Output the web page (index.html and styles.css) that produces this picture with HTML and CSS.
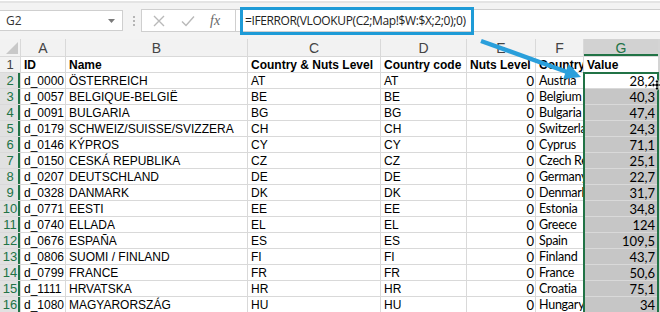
FILE: index.html
```html
<!DOCTYPE html>
<html lang="en">
<head>
  <meta charset="UTF-8" />
  <title>Value lookup</title>
  <link rel="stylesheet" href="styles.css">
</head>
<body>
  <div class="app">
    <div class="formula-bar">
      <div class="name-box">
        <span class="name">G2</span>
        <svg class="caret" width="7" height="4" viewBox="0 0 7 4"><path d="M0 0h7L3.5 4z" /></svg>
      </div>
      <div class="grip"><i></i><i></i><i></i></div>
      <div class="fx-tools">
        <svg class="tool" width="14" height="14" viewBox="0 0 14 14"><path d="M2 2l10 10M12 2L2 12" /></svg>
        <svg class="tool" width="16" height="14" viewBox="0 0 16 14"><path d="M2 7.5l4 4L14 2.5" /></svg>
        <span class="fx">fx</span>
      </div>
      <div class="formula">
        <span class="formula-text">=IFERROR(VLOOKUP(C2;Map!$W:$X;2;0);0)</span>
      </div>
    </div>

    <div class="sheet">
      <div class="grid">
        <div class="corner"><svg width="12" height="12" viewBox="0 0 12 12"><path d="M12 0V12H0z" /></svg></div>
        <div class="col">A</div><div class="col">B</div><div class="col">C</div><div class="col">D</div><div class="col">E</div><div class="col">F</div><div class="col on">G</div>

        <div class="row">1</div><div class="cell hd">ID</div><div class="cell hd">Name</div><div class="cell hd">Country &amp; Nuts Level</div><div class="cell hd">Country code</div><div class="cell hd">Nuts Level</div><div class="cell hd">Country</div><div class="cell hd">Value</div>
        <div class="row sel">2</div><div class="cell">d_0000</div><div class="cell">ÖSTERREICH</div><div class="cell">AT</div><div class="cell">AT</div><div class="cell num">0</div><div class="cell cal">Austria</div><div class="cell val active">28,2</div>
        <div class="row sel">3</div><div class="cell">d_0057</div><div class="cell">BELGIQUE-BELGIË</div><div class="cell">BE</div><div class="cell">BE</div><div class="cell num">0</div><div class="cell cal">Belgium</div><div class="cell val">40,3</div>
        <div class="row sel">4</div><div class="cell">d_0091</div><div class="cell">BULGARIA</div><div class="cell">BG</div><div class="cell">BG</div><div class="cell num">0</div><div class="cell cal">Bulgaria</div><div class="cell val">47,4</div>
        <div class="row sel">5</div><div class="cell">d_0179</div><div class="cell">SCHWEIZ/SUISSE/SVIZZERA</div><div class="cell">CH</div><div class="cell">CH</div><div class="cell num">0</div><div class="cell cal">Switzerland</div><div class="cell val">24,3</div>
        <div class="row sel">6</div><div class="cell">d_0146</div><div class="cell">KÝPROS</div><div class="cell">CY</div><div class="cell">CY</div><div class="cell num">0</div><div class="cell cal">Cyprus</div><div class="cell val">71,1</div>
        <div class="row sel">7</div><div class="cell">d_0150</div><div class="cell">CESKÁ REPUBLIKA</div><div class="cell">CZ</div><div class="cell">CZ</div><div class="cell num">0</div><div class="cell cal">Czech Republic</div><div class="cell val">25,1</div>
        <div class="row sel">8</div><div class="cell">d_0207</div><div class="cell">DEUTSCHLAND</div><div class="cell">DE</div><div class="cell">DE</div><div class="cell num">0</div><div class="cell cal">Germany</div><div class="cell val">22,7</div>
        <div class="row sel">9</div><div class="cell">d_0328</div><div class="cell">DANMARK</div><div class="cell">DK</div><div class="cell">DK</div><div class="cell num">0</div><div class="cell cal">Denmark</div><div class="cell val">31,7</div>
        <div class="row sel">10</div><div class="cell">d_0771</div><div class="cell">EESTI</div><div class="cell">EE</div><div class="cell">EE</div><div class="cell num">0</div><div class="cell cal">Estonia</div><div class="cell val">34,8</div>
        <div class="row sel">11</div><div class="cell">d_0740</div><div class="cell">ELLADA</div><div class="cell">EL</div><div class="cell">EL</div><div class="cell num">0</div><div class="cell cal">Greece</div><div class="cell val">124</div>
        <div class="row sel">12</div><div class="cell">d_0676</div><div class="cell">ESPAÑA</div><div class="cell">ES</div><div class="cell">ES</div><div class="cell num">0</div><div class="cell cal">Spain</div><div class="cell val">109,5</div>
        <div class="row sel">13</div><div class="cell">d_0806</div><div class="cell">SUOMI / FINLAND</div><div class="cell">FI</div><div class="cell">FI</div><div class="cell num">0</div><div class="cell cal">Finland</div><div class="cell val">43,7</div>
        <div class="row sel">14</div><div class="cell">d_0799</div><div class="cell">FRANCE</div><div class="cell">FR</div><div class="cell">FR</div><div class="cell num">0</div><div class="cell cal">France</div><div class="cell val">50,6</div>
        <div class="row sel">15</div><div class="cell">d_1111</div><div class="cell">HRVATSKA</div><div class="cell">HR</div><div class="cell">HR</div><div class="cell num">0</div><div class="cell cal">Croatia</div><div class="cell val">75,1</div>
        <div class="row sel">16</div><div class="cell">d_1080</div><div class="cell">MAGYARORSZÁG</div><div class="cell">HU</div><div class="cell">HU</div><div class="cell num">0</div><div class="cell cal">Hungary</div><div class="cell val">34</div>
      </div>
      <div class="selection"></div>
    </div>

    <!-- overlays drawn in page coordinates -->
    <svg class="cursor" width="12" height="12" viewBox="0 0 12 12">
      <path d="M6 0.5L8.5 3H7V5H9V3.5L11.5 6L9 8.5V7H7V9H8.5L6 11.5L3.5 9H5V7H3V8.5L0.5 6L3 3.5V5H5V3H3.5Z" />
    </svg>
    <svg class="arrow" width="660" height="312" viewBox="0 0 660 312">
      <line x1="481" y1="41" x2="567" y2="72" />
      <polygon points="581,77 563.2,79.1 568.6,64.1" />
    </svg>
  </div>
</body>
</html>
```

FILE: styles.css
```css
body {
  margin: 0;
  background: #fff;
  font-family: 'Liberation Sans', Arial, sans-serif;
  color: #000;
}

.app {
  position: relative;
  width: 660px;
  height: 312px;
  overflow: hidden;
}

/* formula bar */
.formula-bar {
  display: flex;
  align-items: flex-start;
  height: 38px;
  box-sizing: border-box;
  padding-top: 10px;
  background: #f3f3f3;
  border-top: 2px solid #e4e4e4;
  margin-top: 1px;
}

.name-box {
  display: flex;
  align-items: center;
  justify-content: space-between;
  box-sizing: border-box;
  width: 124px;
  height: 21px;
  margin-top: -3px;
  margin-left: -1px;
  padding: 0 7px 0 6px;
  background: #fff;
  border: 1px solid #cfcfcf;
  font-family: 'Open Sans', sans-serif;
  font-size: 12px;
  color: #333;
}

.caret path {
  fill: #7a7a7a;
}

.grip {
  display: flex;
  flex-direction: column;
  gap: 2px;
  margin: 3px 6px 0 10px;
}

.grip i {
  width: 2px;
  height: 2px;
  background: #b5b5b5;
}

.fx-tools {
  display: flex;
  align-items: center;
  gap: 14px;
  box-sizing: border-box;
  width: 95px;
  height: 23px;
  margin-top: -4px;
  padding-left: 10px;
  background: #fff;
  border: 1px solid #cfcfcf;
}

.tool path {
  fill: none;
  stroke: #b9b9b9;
  stroke-width: 1.4;
}

.fx {
  font-family: 'Liberation Serif', serif;
  font-style: italic;
  font-size: 14px;
  color: #666;
}

.formula {
  flex: 1;
  display: flex;
  align-items: center;
  box-sizing: border-box;
  height: 23px;
  margin-top: -4px;
  margin-left: -1px;
  background: #fff;
  border: 1px solid #cfcfcf;
  border-right: none;
}

.formula-text {
  box-sizing: border-box;
  height: 28px;
  margin-left: 4px;
  padding: 0 5px 0 2px;
  border: 3px solid #1e9bd7;
  font-family: 'Open Sans', sans-serif;
  font-size: 12px;
  letter-spacing: -0.38px;
  line-height: 22px;
  color: #222;
}

/* sheet */
.sheet {
  position: relative;
  height: 274px;
  background: #d4d4d4;
}

.grid {
  display: grid;
  grid-template-columns: 20px 44px 181px 132px 85px 68px 47px 74px;
  grid-template-rows: 17px repeat(16, 15px);
  gap: 1px;
  width: 658px;
  background: #d9d9d9;
}

.corner {
  display: flex;
  align-items: flex-end;
  justify-content: flex-end;
  padding: 0 2px 2px 0;
  background: #f2f2f2;
}

.corner path {
  fill: #c8c8c8;
}

.col {
  background: #f2f2f2;
  text-align: center;
  font-size: 14px;
  line-height: 18px;
  color: #444;
}

.col.on {
  background: #d2d2d2;
  color: #217346;
  box-shadow: inset 0 -2px 0 #217346;
}

.row {
  background: #f2f2f2;
  text-align: center;
  font-size: 13px;
  line-height: 16px;
  color: #444;
}

.row.sel {
  background: #e1e1e1;
  color: #217346;
  box-shadow: inset -2px 0 0 #217346;
}

.cell {
  padding: 0 3px;
  background: #fff;
  font-size: 12px;
  line-height: 16px;
  white-space: nowrap;
  overflow: hidden;
}

.cell.hd {
  font-weight: bold;
}

.cal,
.num,
.val {
  font-family: Lato, sans-serif;
  font-size: 13px;
}

.cal {
  font-size: 12.5px;
  letter-spacing: -0.25px;
}

.num {
  padding-right: 1px;
  text-align: right;
}

.val {
  text-align: right;
  background: #c6c6c6;
}

.val.active {
  background: #fff;
}

.selection {
  position: absolute;
  left: 583px;
  top: 33px;
  width: 76px;
  height: 250px;
  box-sizing: border-box;
  border: 2px solid #217346;
  pointer-events: none;
}

.cursor {
  position: absolute;
  left: 651px;
  top: 79px;
}

.cursor path {
  fill: #000;
  stroke: #fff;
  stroke-width: 0.8;
}

.arrow {
  position: absolute;
  left: 0;
  top: 0;
  pointer-events: none;
}

.arrow line {
  stroke: #2a9fdb;
  stroke-width: 4.5;
}

.arrow polygon {
  fill: #2a9fdb;
}
```
